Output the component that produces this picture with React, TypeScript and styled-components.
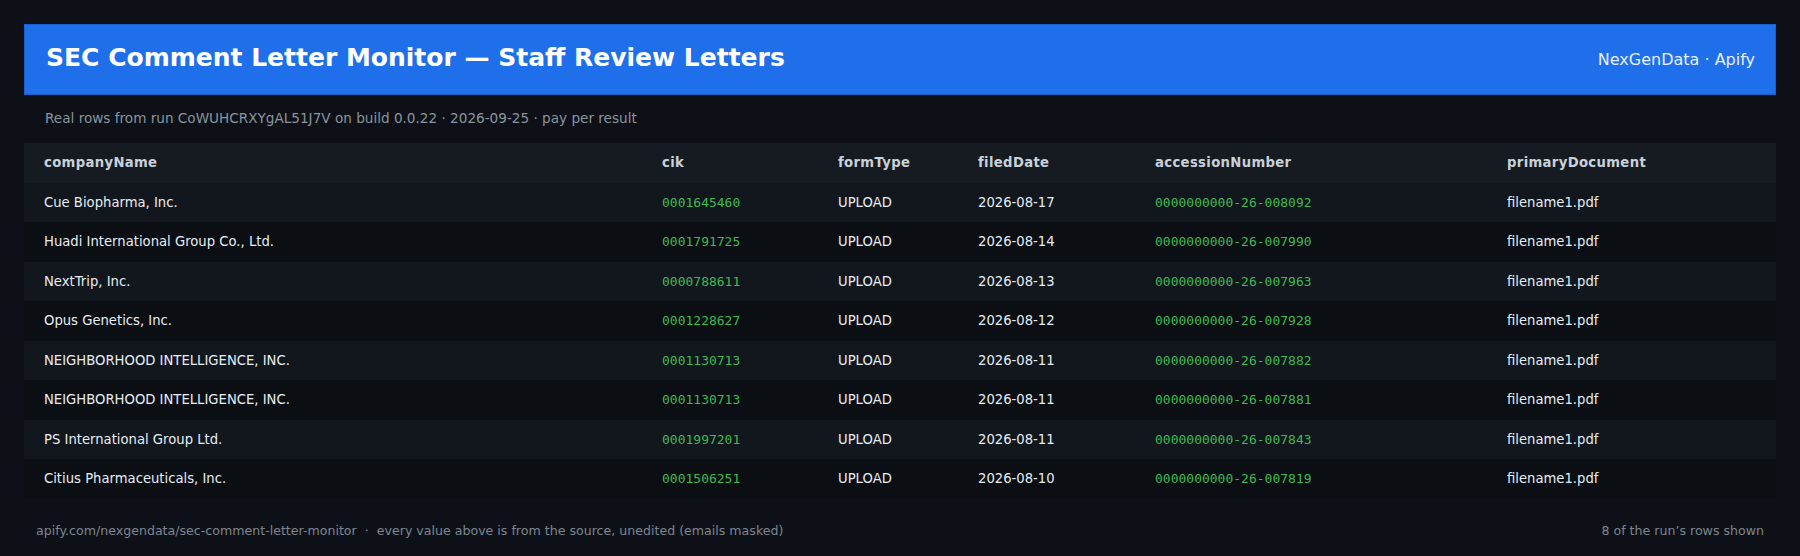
import React from "react";
import styled, { createGlobalStyle } from "styled-components";

const GlobalStyle = createGlobalStyle`
  html, body {
    margin: 0;
    padding: 0;
    background: #0d1117;
  }
  body {
    font-family: "DejaVu Sans", sans-serif;
    color: #e6edf3;
  }
`;

const Page = styled.div`
  padding: 24px 24px 20px;
  background: #0d1117;
`;

const TitleBar = styled.header`
  display: flex;
  align-items: center;
  justify-content: space-between;
  box-sizing: border-box;
  height: 71px;
  padding: 0 20px 4px 21px;
  background: #1f6feb;
  border: 1px solid #1b60cc;
`;

const Title = styled.h1`
  margin: 0;
  font-family: "DejaVu Sans", sans-serif;
  font-size: 25px;
  font-weight: 700;
  color: #ffffff;
`;

const Brand = styled.div`
  font-size: 16px;
  color: #e8f0ff;
  margin-top: 4px;
`;

const Subtitle = styled.p`
  margin: 0;
  padding: 15px 21px 17px;
  font-size: 13.6px;
  color: #8b949e;
`;

const Table = styled.table`
  width: 100%;
  table-layout: fixed;
  border-collapse: collapse;
  font-size: 13.2px;
  line-height: 19.5px;
`;

const HeadCell = styled.th`
  text-align: left;
  padding: 10px 20px;
  font-weight: 700;
  letter-spacing: 0.35px;
  color: #c9d1d9;
  background: #161b22;
  white-space: nowrap;
`;

const Row = styled.tr<{ $odd: boolean }>`
  background: ${(p) => (p.$odd ? "#12171e" : "#0b0f14")};
`;

const Cell = styled.td<{ $mono?: boolean }>`
  padding: 10px 20px;
  white-space: nowrap;
  color: ${(p) => (p.$mono ? "#3fb950" : "#e6edf3")};
  font-family: ${(p) =>
    p.$mono ? '"DejaVu Sans Mono", monospace' : '"DejaVu Sans", sans-serif'};
  font-size: ${(p) => (p.$mono ? "13px" : "13.2px")};
`;

const Footer = styled.footer`
  display: flex;
  justify-content: space-between;
  align-items: center;
  padding: 24px 12px 0;
  font-size: 12.6px;
  color: #7d8590;
`;

const Sep = styled.span`
  margin: 0 4px;
`;

const columns = [
  { key: "companyName", width: 618 },
  { key: "cik", width: 176 },
  { key: "formType", width: 140 },
  { key: "filedDate", width: 177 },
  { key: "accessionNumber", width: 352 },
  { key: "primaryDocument", width: 289 },
];

const rows = [
  ["Cue Biopharma, Inc.", "0001645460", "2026-08-17", "0000000000-26-008092"],
  ["Huadi International Group Co., Ltd.", "0001791725", "2026-08-14", "0000000000-26-007990"],
  ["NextTrip, Inc.", "0000788611", "2026-08-13", "0000000000-26-007963"],
  ["Opus Genetics, Inc.", "0001228627", "2026-08-12", "0000000000-26-007928"],
  ["NEIGHBORHOOD INTELLIGENCE, INC.", "0001130713", "2026-08-11", "0000000000-26-007882"],
  ["NEIGHBORHOOD INTELLIGENCE, INC.", "0001130713", "2026-08-11", "0000000000-26-007881"],
  ["PS International Group Ltd.", "0001997201", "2026-08-11", "0000000000-26-007843"],
  ["Citius Pharmaceuticals, Inc.", "0001506251", "2026-08-10", "0000000000-26-007819"],
];

export default function App() {
  return (
    <>
      <GlobalStyle />
      <Page>
        <TitleBar>
          <Title>SEC Comment Letter Monitor — Staff Review Letters</Title>
          <Brand>NexGenData · Apify</Brand>
        </TitleBar>
        <Subtitle>
          Real rows from run CoWUHCRXYgAL51J7V on build 0.0.22 · 2026-09-25 · pay per result
        </Subtitle>
        <Table>
          <colgroup>
            {columns.map((c) => (
              <col key={c.key} style={{ width: c.width }} />
            ))}
          </colgroup>
          <thead>
            <tr>
              {columns.map((c) => (
                <HeadCell key={c.key}>{c.key}</HeadCell>
              ))}
            </tr>
          </thead>
          <tbody>
            {rows.map((r, i) => (
              <Row key={i} $odd={i % 2 === 0}>
                <Cell>{r[0]}</Cell>
                <Cell $mono>{r[1]}</Cell>
                <Cell>UPLOAD</Cell>
                <Cell>{r[2]}</Cell>
                <Cell $mono>{r[3]}</Cell>
                <Cell>filename1.pdf</Cell>
              </Row>
            ))}
          </tbody>
        </Table>
        <Footer>
          <span>
            apify.com/nexgendata/sec-comment-letter-monitor <Sep>·</Sep> every value above is from the source, unedited (emails masked)
          </span>
          <span>8 of the run’s rows shown</span>
        </Footer>
      </Page>
    </>
  );
}
